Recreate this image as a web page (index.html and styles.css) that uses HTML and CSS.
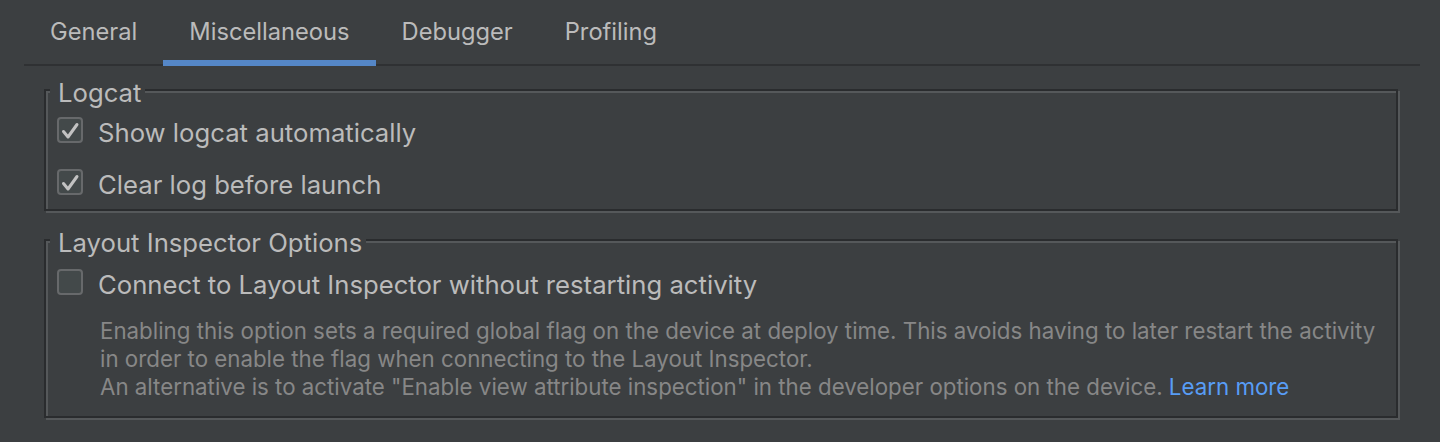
FILE: index.html
```html
<!DOCTYPE html>
<html>
<head>
<meta charset="utf-8">
<link rel="stylesheet" href="styles.css">
</head>
<body>
<div class="tabs">
  <div class="tab">General</div>
  <div class="tab active">Miscellaneous</div>
  <div class="tab">Debugger</div>
  <div class="tab">Profiling</div>
</div>

<div class="group group-logcat">
  <div class="group-title">Logcat</div>
  <label class="row">
    <span class="cb checked"><svg viewBox="0 0 26 26" width="26" height="26"><path d="M6.5 14.5 L11 20 L20 7.5" fill="none" stroke="#c2c2c2" stroke-width="3" stroke-linecap="round" stroke-linejoin="round"/></svg></span>
    <span class="row-text">Show logcat automatically</span>
  </label>
  <label class="row">
    <span class="cb checked"><svg viewBox="0 0 26 26" width="26" height="26"><path d="M6.5 14.5 L11 20 L20 7.5" fill="none" stroke="#c2c2c2" stroke-width="3" stroke-linecap="round" stroke-linejoin="round"/></svg></span>
    <span class="row-text">Clear log before launch</span>
  </label>
</div>

<div class="group group-inspector">
  <div class="group-title">Layout Inspector Options</div>
  <label class="row">
    <span class="cb"></span>
    <span class="row-text">Connect to Layout Inspector without restarting activity</span>
  </label>
  <div class="desc">
    <div>Enabling this option sets a required global flag on the device at deploy time. This avoids having to later restart the activity</div>
    <div>in order to enable the flag when connecting to the Layout Inspector.</div>
    <div>An alternative is to activate "Enable view attribute inspection" in the developer options on the device. <a class="link">Learn more</a></div>
  </div>
</div>
</body>
</html>
```

FILE: styles.css
```css
html, body {
  margin: 0;
  padding: 0;
  background: #3c3f41;
  height: 100%;
}
body {
  font-family: Inter, "Open Sans", sans-serif;
  color: #bbbbbb;
  overflow: hidden;
}
.tabs {
  display: flex;
  margin: 0 20px 0 24px;
  height: 64px;
  border-bottom: 2px solid #2f3133;
}
.tab {
  padding: 4px 26px 0;
  height: 56px;
  line-height: 56px;
  font-size: 23.7px;
  border-bottom: 6px solid transparent;
  margin-bottom: -2px;
  color: #bbbbbb;
}
.tab.active {
  border-bottom-color: #5587c7;
}
.group {
  position: relative;
  margin: 0 42px 0 44px;
  border: 2px solid #2a2c2e;
  box-shadow: inset 2px 2px 0 #55585a, 2px 2px 0 #55585a;
}
.group-logcat {
  margin-top: 23px;
  padding: 13px 0 0 11px;
  height: 122px;
  box-sizing: border-box;
  display: flex;
  flex-direction: column;
  gap: 0;
}
.group-inspector {
  margin-top: 28px;
  padding: 15px 0 15px 11px;
}
.group-title {
  position: absolute;
  top: -13px;
  left: 4px;
  padding: 0 4px 0 8px;
  line-height: 30px;
  font-size: 25.7px;
  background: #3c3f41;
}
.row {
  display: flex;
  align-items: center;
  height: 52px;
}
.cb {
  width: 26px;
  height: 26px;
  box-sizing: border-box;
  border: 2px solid #67696b;
  border-radius: 4px;
  background: #43494a;
  position: relative;
  flex: none;
}
.cb svg {
  position: absolute;
  left: -2px;
  top: -2px;
}
.row-text {
  margin-left: 15px;
  font-size: 25.7px;
  line-height: 30px;
  padding-top: 5px;
}
.desc {
  margin: 9px 0 0 43px;
  font-size: 22.3px;
  line-height: 28px;
  color: #878787;
}
.link {
  color: #589df6;
}
```
